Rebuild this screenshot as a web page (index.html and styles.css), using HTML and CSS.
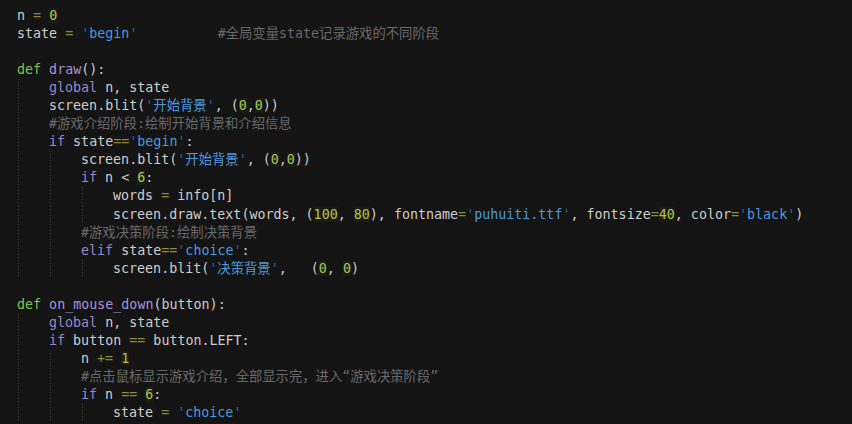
FILE: index.html
```html
<!DOCTYPE html>
<html>
<head>
<meta charset="utf-8">
<link rel="stylesheet" href="styles.css">
</head>
<body>
<div class="code">
<div class="ln">n <span class="op">=</span> <span class="num">0</span></div>
<div class="ln">state <span class="op">=</span> <span class="q">'</span><span class="str">begin</span><span class="q">'</span>          <span class="cm">#全局变量state记录游戏的不同阶段</span></div>
<div class="ln"> </div>
<div class="ln"><span class="def">def</span> <span class="fn">draw</span>():</div>
<div class="ln"><span class="ind"></span><span class="kw">global</span> n, state</div>
<div class="ln"><span class="ind"></span>screen.blit(<span class="q">'</span><span class="str">开始背景</span><span class="q">'</span>, (<span class="num">0</span>,<span class="num">0</span>))</div>
<div class="ln"><span class="ind"></span><span class="cm">#游戏介绍阶段:绘制开始背景和介绍信息</span></div>
<div class="ln"><span class="ind"></span><span class="kw">if</span> state<span class="op">==</span><span class="q">'</span><span class="str">begin</span><span class="q">'</span>:</div>
<div class="ln"><span class="ind"></span><span class="ind"></span>screen.blit(<span class="q">'</span><span class="str">开始背景</span><span class="q">'</span>, (<span class="num">0</span>,<span class="num">0</span>))</div>
<div class="ln"><span class="ind"></span><span class="ind"></span><span class="kw">if</span> n &lt; <span class="num">6</span>:</div>
<div class="ln"><span class="ind"></span><span class="ind"></span><span class="ind"></span>words <span class="op">=</span> info[n]</div>
<div class="ln"><span class="ind"></span><span class="ind"></span><span class="ind"></span>screen.draw.text(words, (<span class="num">100</span>, <span class="num">80</span>), fontname<span class="op">=</span><span class="q">'</span><span class="str">puhuiti.ttf</span><span class="q">'</span>, fontsize<span class="op">=</span><span class="num">40</span>, color<span class="op">=</span><span class="q">'</span><span class="str">black</span><span class="q">'</span>)</div>
<div class="ln"><span class="ind"></span><span class="ind"></span><span class="cm">#游戏决策阶段:绘制决策背景</span></div>
<div class="ln"><span class="ind"></span><span class="ind"></span><span class="kw">elif</span> state<span class="op">==</span><span class="q">'</span><span class="str">choice</span><span class="q">'</span>:</div>
<div class="ln"><span class="ind"></span><span class="ind"></span><span class="ind"></span>screen.blit(<span class="q">'</span><span class="str">决策背景</span><span class="q">'</span>,   (<span class="num">0</span>, <span class="num">0</span>)</div>
<div class="ln"> </div>
<div class="ln"><span class="def">def</span> <span class="fn">on_mouse_down</span>(button):</div>
<div class="ln"><span class="ind"></span><span class="kw">global</span> n, state</div>
<div class="ln"><span class="ind"></span><span class="kw">if</span> button <span class="op">==</span> button.LEFT:</div>
<div class="ln"><span class="ind"></span><span class="ind"></span>n <span class="op">+=</span> <span class="num">1</span></div>
<div class="ln"><span class="ind"></span><span class="ind"></span><span class="cm">#点击鼠标显示游戏介绍，全部显示完，进入“游戏决策阶段”</span></div>
<div class="ln"><span class="ind"></span><span class="ind"></span><span class="kw">if</span> n <span class="op">==</span> <span class="num">6</span>:</div>
<div class="ln"><span class="ind"></span><span class="ind"></span><span class="ind"></span>state <span class="op">=</span> <span class="q">'</span><span class="str">choice</span><span class="q">'</span></div>
</div>
</body>
</html>
```

FILE: styles.css
```css
html, body {
  margin: 0;
  padding: 0;
  background: #141414;
  overflow: hidden;
}
.code {
  padding: 7px 0 0 17px;
  font-family: "DejaVu Sans Mono", "Noto Sans CJK SC", monospace;
  font-size: 13.33px;
  line-height: 18.05px;
  color: #cdcdcd;
}
.ln {
  white-space: pre;
  height: 18.05px;
}
.ind {
  display: inline-block;
  width: 32px;
  height: 18.05px;
  vertical-align: top;
  background-image: linear-gradient(#3a3a3a 50%, transparent 50%);
  background-size: 1px 3px;
  background-repeat: repeat-y;
  background-position: 1px 0;
}
.op { color: #8c8b3c; }
.num { color: #b3c557; background: #1b1c12; }
.str { color: #4f98dc; }
.q { color: #2f6aa3; }
.cm { color: #696969; }
.def { color: #7fc64a; }
.fn { color: #a793d9; }
.kw { color: #9a87c9; }
```
